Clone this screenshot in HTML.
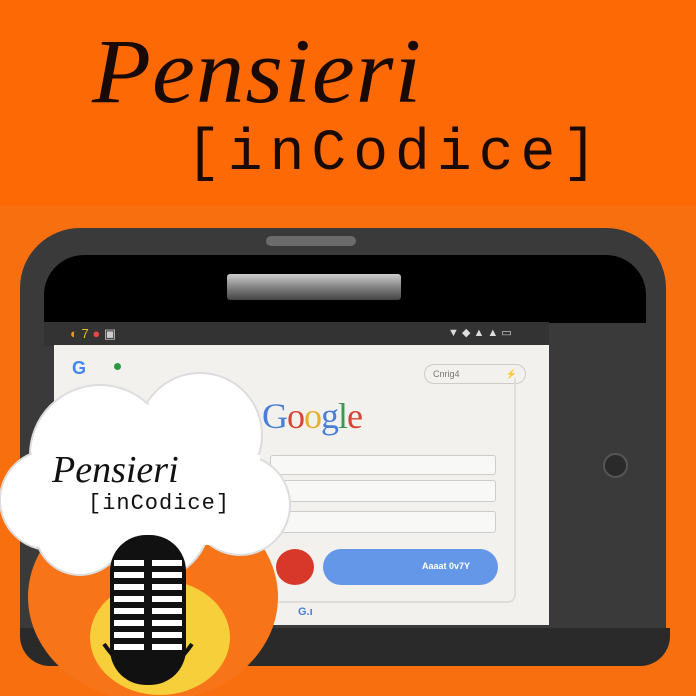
<!DOCTYPE html>
<html><head><meta charset="utf-8"><style>
*{margin:0;padding:0;box-sizing:border-box}
html,body{width:696px;height:696px;overflow:hidden}
body{background:#fd6a05;position:relative;font-family:"Liberation Sans",sans-serif}
.a{position:absolute}
</style></head><body>
<div class="a" style="left:0;top:205px;width:696px;height:491px;background:#f86f10"></div>
<div class="a" style="left:92px;top:18px;font-family:'Liberation Serif',serif;font-style:italic;font-size:92px;color:#1a0a05;letter-spacing:1px;transform:scaleX(1.05);transform-origin:left">Pensieri</div>
<div class="a" style="left:186px;top:122px;font-family:'Liberation Mono',monospace;font-size:58px;color:#1a0a05;letter-spacing:7px">[inCodice]</div>
<!-- device -->
<div class="a" style="left:20px;top:228px;width:646px;height:420px;background:#3b3a3a;border-radius:60px 60px 20px 20px"></div>
<div class="a" style="left:20px;top:628px;width:650px;height:38px;background:#2a2a2a;border-radius:0 0 30px 30px"></div>
<div class="a" style="left:266px;top:236px;width:90px;height:10px;background:#6b6b6b;border-radius:6px"></div>
<div class="a" style="left:44px;top:255px;width:602px;height:68px;background:#000;border-radius:40px 40px 0 0"></div>
<div class="a" style="left:227px;top:274px;width:174px;height:26px;background:linear-gradient(#ccc,#777 60%,#444);border-radius:3px"></div>
<div class="a" style="left:44px;top:322px;width:505px;height:24px;background:#333"></div>
<div class="a" style="left:70px;top:326px;font-size:13px;color:#e0a020">◐ <span style="color:#e8c020">7</span> <span style="color:#e44">●</span> <span style="color:#ccc">▣</span></div>
<div class="a" style="left:448px;top:326px;font-size:11px;color:#ddd">▼ ◆ ▲ ▲ ▭</div>
<div class="a" style="left:54px;top:345px;width:495px;height:280px;background:#f2f1ee"></div>
<div class="a" style="left:72px;top:358px;font-size:18px;font-weight:bold;color:#4285f4">G</div>
<div class="a" style="left:114px;top:363px;width:7px;height:7px;border-radius:50%;background:#2a9a40"></div>
<div class="a" style="left:424px;top:364px;width:102px;height:20px;border:1px solid #ccc;border-radius:10px;font-size:9px;color:#777;padding:4px 8px">Cnrig4 <span style="float:right">⚡</span></div>
<div class="a" style="left:260px;top:378px;width:256px;height:225px;border-right:2px solid #ddd;border-bottom:2px solid #ddd;border-radius:0 0 8px 0"></div>
<div class="a" style="left:262px;top:395px;font-family:'Liberation Serif',serif;font-size:36px;letter-spacing:-1px"><span style="color:#4a7fd8">G</span><span style="color:#d84535">o</span><span style="color:#e8b030">o</span><span style="color:#4a7fd8">g</span><span style="color:#3a9a50">l</span><span style="color:#d84535">e</span></div>
<div class="a" style="left:270px;top:455px;width:226px;height:20px;border:1px solid #ccc;border-radius:3px;background:#f8f8f6"></div>
<div class="a" style="left:270px;top:480px;width:226px;height:22px;border:1px solid #ccc;border-radius:3px;background:#f8f8f6"></div>
<div class="a" style="left:270px;top:511px;width:226px;height:22px;border:1px solid #ccc;border-radius:3px;background:#f8f8f6"></div>
<div class="a" style="left:276px;top:549px;width:38px;height:36px;border-radius:50%;background:#d8382a"></div>
<div class="a" style="left:323px;top:549px;width:175px;height:36px;border-radius:18px;background:#6597e8;color:#fff;font-size:9px;font-weight:bold;text-align:right;padding:12px 28px">Aaaat 0v7Y</div>
<div class="a" style="left:298px;top:606px;font-size:11px;color:#4a7fd8;font-weight:bold">G.ı</div>
<div class="a" style="left:603px;top:453px;width:25px;height:25px;border-radius:50%;background:#2a2a2a;border:2px solid #555"></div>
<!-- logo -->
<div class="a" style="left:28px;top:492px;width:250px;height:210px;border-radius:50%;background:#f77418"></div>
<div class="a" style="left:90px;top:580px;width:140px;height:115px;border-radius:50%;background:#f7cf3a"></div>
<svg class="a" style="left:0;top:365px" width="300" height="215" viewBox="0 0 300 215">
<g fill="#fff" stroke="#ddd" stroke-width="2">
<circle cx="200" cy="70" r="62"/><circle cx="100" cy="90" r="70"/><circle cx="50" cy="135" r="50"/><circle cx="240" cy="140" r="50"/><circle cx="150" cy="155" r="60"/><circle cx="80" cy="165" r="45"/>
</g>
<g fill="#fff"><circle cx="200" cy="70" r="60"/><circle cx="100" cy="90" r="68"/><circle cx="50" cy="135" r="48"/><circle cx="240" cy="140" r="48"/><circle cx="150" cy="155" r="58"/><circle cx="80" cy="165" r="43"/><rect x="60" y="90" width="200" height="90"/></g>
</svg>
<div class="a" style="left:52px;top:448px;font-family:'Liberation Serif',serif;font-style:italic;font-size:38px;color:#111">Pensieri</div>
<div class="a" style="left:88px;top:491px;font-family:'Liberation Mono',monospace;font-size:22px;color:#111;letter-spacing:1px">[inCodice]</div>
<svg class="a" style="left:100px;top:532px" width="96" height="160" viewBox="0 0 96 160">
<rect x="10" y="3" width="76" height="150" rx="36" fill="#111"/>
<g fill="#fff">
<rect x="14" y="28" width="30" height="6"/><rect x="52" y="28" width="30" height="6"/>
<rect x="14" y="40" width="30" height="6"/><rect x="52" y="40" width="30" height="6"/>
<rect x="14" y="52" width="30" height="6"/><rect x="52" y="52" width="30" height="6"/>
<rect x="14" y="64" width="30" height="6"/><rect x="52" y="64" width="30" height="6"/>
<rect x="14" y="76" width="30" height="6"/><rect x="52" y="76" width="30" height="6"/>
<rect x="14" y="88" width="30" height="6"/><rect x="52" y="88" width="30" height="6"/>
<rect x="14" y="100" width="30" height="6"/><rect x="52" y="100" width="30" height="6"/>
<rect x="14" y="112" width="30" height="6"/><rect x="52" y="112" width="30" height="6"/>
</g>
<path d="M4 112 Q48 175 92 112" fill="none" stroke="#111" stroke-width="4"/>
</svg>
</body></html>
